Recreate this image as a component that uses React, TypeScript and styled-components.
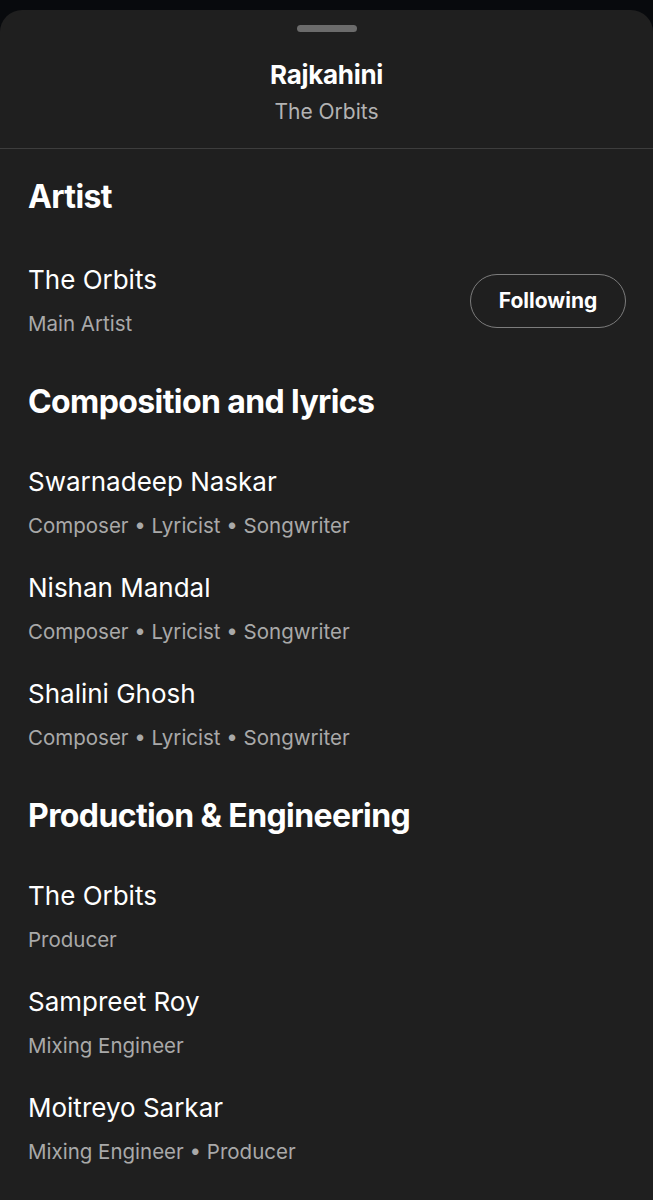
import React from 'react'
import styled, { createGlobalStyle } from 'styled-components'

const GlobalStyle = createGlobalStyle`
  html, body {
    margin: 0;
    padding: 0;
    background: #080a0d;
  }
  body {
    font-family: Inter, 'Noto Sans', sans-serif;
    -webkit-font-smoothing: antialiased;
  }
`

const Sheet = styled.div`
  margin-top: 10px;
  min-height: 1190px;
  background: #1f1f1f;
  border-radius: 22px 22px 0 0;
  color: #fff;
  overflow: hidden;
`

const Header = styled.header`
  display: flex;
  flex-direction: column;
  align-items: center;
  padding: 15px 0 22px;
  border-bottom: 1px solid #3d3d3d;
`

const Handle = styled.div`
  width: 60px;
  height: 7px;
  border-radius: 4px;
  background: #6b6b6b;
  margin-bottom: 27px;
`

const Title = styled.h1`
  margin: 0;
  font-size: 26px;
  line-height: 32px;
  font-weight: 700;
  letter-spacing: -0.3px;
`

const Subtitle = styled.div`
  margin-top: 7px;
  font-size: 21px;
  line-height: 28px;
  color: #b3b3b3;
`

const Content = styled.main`
  padding: 0 27px 0 28px;
`

const SectionTitle = styled.h2<{ $first?: boolean }>`
  margin: ${({ $first }) => ($first ? '28px 0 30px' : '29px 0 27px')};
  font-size: 32px;
  line-height: 40px;
  font-weight: 700;
  letter-spacing: -0.6px;
`

const Row = styled.div`
  display: flex;
  align-items: center;
  justify-content: space-between;
  padding: 17px 0 16px;
`

const Info = styled.div`
  display: flex;
  flex-direction: column;
`

const Name = styled.div`
  font-size: 26px;
  line-height: 32px;
`

const Role = styled.div`
  margin-top: 15px;
  font-size: 20.5px;
  line-height: 26px;
  color: #a9a9a9;
`

const FollowButton = styled.button`
  height: 54px;
  width: 156px;
  border-radius: 27px;
  border: 1.5px solid #7c7c7c;
  background: transparent;
  color: #fff;
  font-family: inherit;
  font-size: 21px;
  font-weight: 700;
  cursor: pointer;
`

type Credit = { name: string; roles: string[] }

const sections: { title: string; credits: Credit[] }[] = [
  {
    title: 'Composition and lyrics',
    credits: [
      { name: 'Swarnadeep Naskar', roles: ['Composer', 'Lyricist', 'Songwriter'] },
      { name: 'Nishan Mandal', roles: ['Composer', 'Lyricist', 'Songwriter'] },
      { name: 'Shalini Ghosh', roles: ['Composer', 'Lyricist', 'Songwriter'] },
    ],
  },
  {
    title: 'Production & Engineering',
    credits: [
      { name: 'The Orbits', roles: ['Producer'] },
      { name: 'Sampreet Roy', roles: ['Mixing Engineer'] },
      { name: 'Moitreyo Sarkar', roles: ['Mixing Engineer', 'Producer'] },
    ],
  },
]

export default function App() {
  return (
    <>
      <GlobalStyle />
      <Sheet>
        <Header>
          <Handle />
          <Title>Rajkahini</Title>
          <Subtitle>The Orbits</Subtitle>
        </Header>
        <Content>
          <SectionTitle $first>Artist</SectionTitle>
          <Row>
            <Info>
              <Name>The Orbits</Name>
              <Role>Main Artist</Role>
            </Info>
            <FollowButton>Following</FollowButton>
          </Row>
          {sections.map((section) => (
            <section key={section.title}>
              <SectionTitle>{section.title}</SectionTitle>
              {section.credits.map((c) => (
                <Row key={c.name}>
                  <Info>
                    <Name>{c.name}</Name>
                    <Role>{c.roles.join(' • ')}</Role>
                  </Info>
                </Row>
              ))}
            </section>
          ))}
        </Content>
      </Sheet>
    </>
  )
}
